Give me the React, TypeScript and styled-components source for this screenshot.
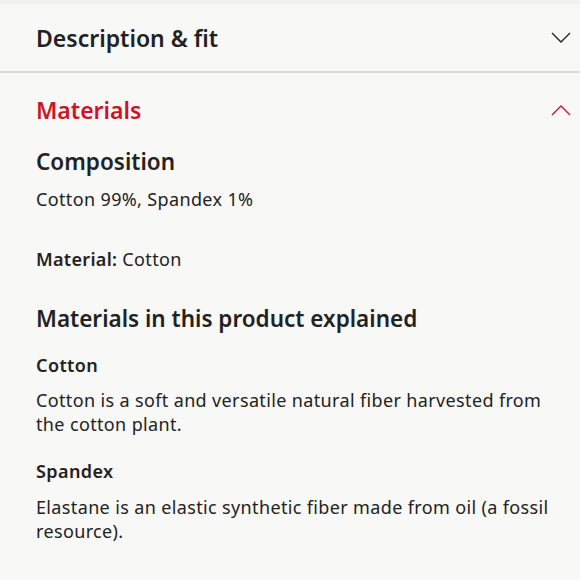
import React from 'react';
import styled, { createGlobalStyle } from 'styled-components';

const GlobalStyle = createGlobalStyle`
  html, body {
    margin: 0;
    padding: 0;
    background: #f8f8f6;
  }
  body {
    font-family: 'Noto Sans', Lato, sans-serif;
    color: #222;
    -webkit-font-smoothing: antialiased;
  }
`;

const Page = styled.div`
  width: 580px;
  height: 580px;
  overflow: hidden;
  background: #f8f8f6;
  border-top: 4px solid #f1f1ef;
  box-sizing: border-box;
`;

const Section = styled.section<{ $divider?: boolean }>`
  border-bottom: ${p => (p.$divider ? '2px solid #dcdcdb' : 'none')};
`;

const Header = styled.div<{ $height: number; $open?: boolean }>`
  display: flex;
  align-items: center;
  justify-content: space-between;
  height: ${p => p.$height}px;
  padding: 0 8px 0 36px;
  color: ${p => (p.$open ? '#cc1427' : '#222')};
`;

const HeaderTitle = styled.h2`
  margin: 0;
  font-size: 23px;
  line-height: 28px;
  font-weight: 600;
`;

const Body = styled.div`
  padding: 0 20px 0 36px;
`;

const Heading = styled.h3<{ $top?: number }>`
  margin: ${p => p.$top ?? 0}px 0 0;
  font-size: 22.5px;
  line-height: 28px;
  font-weight: 600;
`;

const SubHeading = styled.h4<{ $top?: number }>`
  margin: ${p => p.$top ?? 0}px 0 0;
  font-size: 18px;
  line-height: 24px;
  font-weight: 600;
  letter-spacing: 0.4px;
`;

const Text = styled.p<{ $top?: number }>`
  margin: ${p => p.$top ?? 0}px 0 0;
  font-size: 18px;
  line-height: 24px;
  font-weight: 400;
  letter-spacing: 0.36px;

  strong {
    font-weight: 600;
    letter-spacing: 0.3px;
  }
`;

const Chevron: React.FC<{ up?: boolean }> = ({ up }) => (
  <svg width='22' height='14' viewBox='0 0 22 14' fill='none'>
    <path
      d={up ? 'M2 12 L11 3 L20 12' : 'M2 2 L11 11 L20 2'}
      stroke='currentColor'
      strokeWidth='1.4'
    />
  </svg>
);

const App: React.FC = () => {
  return (
    <Page>
      <GlobalStyle />
      <Section $divider>
        <Header $height={67}>
          <HeaderTitle>Description &amp; fit</HeaderTitle>
          <Chevron />
        </Header>
      </Section>
      <Section>
        <Header $height={73} $open>
          <HeaderTitle>Materials</HeaderTitle>
          <Chevron up />
        </Header>
        <Body>
          <Heading $top={2}>Composition</Heading>
          <Text $top={11}>Cotton 99%, Spandex 1%</Text>
          <Text $top={36}>
            <strong>Material:</strong> Cotton
          </Text>
          <Heading $top={34}>Materials in this product explained</Heading>
          <SubHeading $top={20}>Cotton</SubHeading>
          <Text $top={11}>
            Cotton is a soft and versatile natural fiber harvested from the
            cotton plant.
          </Text>
          <SubHeading $top={23}>Spandex</SubHeading>
          <Text $top={12}>
            Elastane is an elastic synthetic fiber made from oil (a fossil
            resource).
          </Text>
        </Body>
      </Section>
    </Page>
  );
};

export default App;
